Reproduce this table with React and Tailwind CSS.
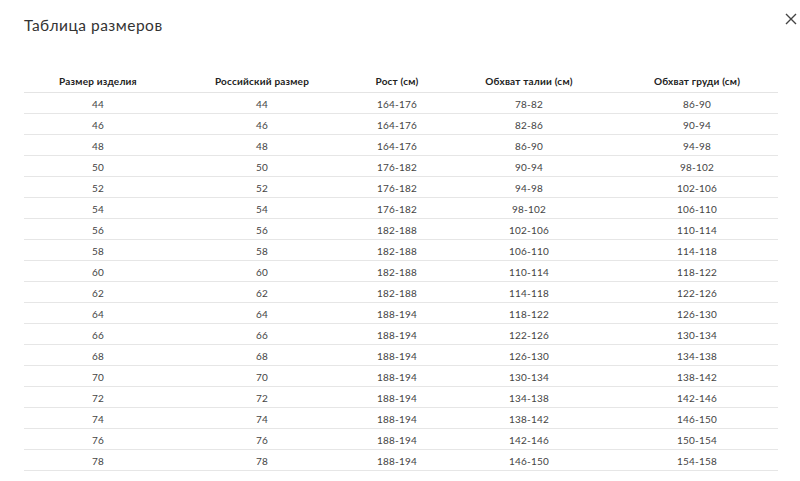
import React from 'react';

const rows = [
  ['44', '44', '164-176', '78-82', '86-90'],
  ['46', '46', '164-176', '82-86', '90-94'],
  ['48', '48', '164-176', '86-90', '94-98'],
  ['50', '50', '176-182', '90-94', '98-102'],
  ['52', '52', '176-182', '94-98', '102-106'],
  ['54', '54', '176-182', '98-102', '106-110'],
  ['56', '56', '182-188', '102-106', '110-114'],
  ['58', '58', '182-188', '106-110', '114-118'],
  ['60', '60', '182-188', '110-114', '118-122'],
  ['62', '62', '182-188', '114-118', '122-126'],
  ['64', '64', '188-194', '118-122', '126-130'],
  ['66', '66', '188-194', '122-126', '130-134'],
  ['68', '68', '188-194', '126-130', '134-138'],
  ['70', '70', '188-194', '130-134', '138-142'],
  ['72', '72', '188-194', '134-138', '142-146'],
  ['74', '74', '188-194', '138-142', '146-150'],
  ['76', '76', '188-194', '142-146', '150-154'],
  ['78', '78', '188-194', '146-150', '154-158'],
];

const headers = ['Размер изделия', 'Российский размер', 'Рост (см)', 'Обхват талии (см)', 'Обхват груди (см)'];
const widths = ['w-[148px]', 'w-[180px]', 'w-[90px]', 'w-[174px]', 'w-[162px]'];

export default function App() {
  return (
    <div className="w-[800px] h-[481px] bg-white relative overflow-hidden font-['Lato','Open_Sans',sans-serif]">
      {/* Close */}
      <button className="absolute right-[2px] top-[12px] text-[#444]">
        <svg width="14" height="14" viewBox="0 0 14 14" fill="none" stroke="currentColor" strokeWidth="1.4">
          <path d="M2 2L12 12M12 2L2 12" />
        </svg>
      </button>

      <div className="px-6 pt-[14px]">
        <h2 className="text-[15.5px] text-[#333] leading-[22px] tracking-[0.5px]">Таблица размеров</h2>

        <table className="table-fixed border-collapse mt-[36px] w-[754px]">
          <colgroup>
            {widths.map((w, i) => (
              <col key={i} className={w} />
            ))}
          </colgroup>
          <thead>
            <tr className="h-[20px] border-b border-[#e4e4e4]">
              {headers.map((h) => (
                <th key={h} className="text-[10px] font-bold text-[#222] text-center align-middle pb-[1px] tracking-[0.2px]">
                  {h}
                </th>
              ))}
            </tr>
          </thead>
          <tbody>
            {rows.map((r) => (
              <tr key={r[0]} className="h-[21px] border-b border-[#e6e6e6]">
                {r.map((c, i) => (
                  <td key={i} className="text-[10px] text-[#444] text-center align-middle pt-[3px] tracking-[0.2px]">
                    {c}
                  </td>
                ))}
              </tr>
            ))}
          </tbody>
        </table>
      </div>
    </div>
  );
}
